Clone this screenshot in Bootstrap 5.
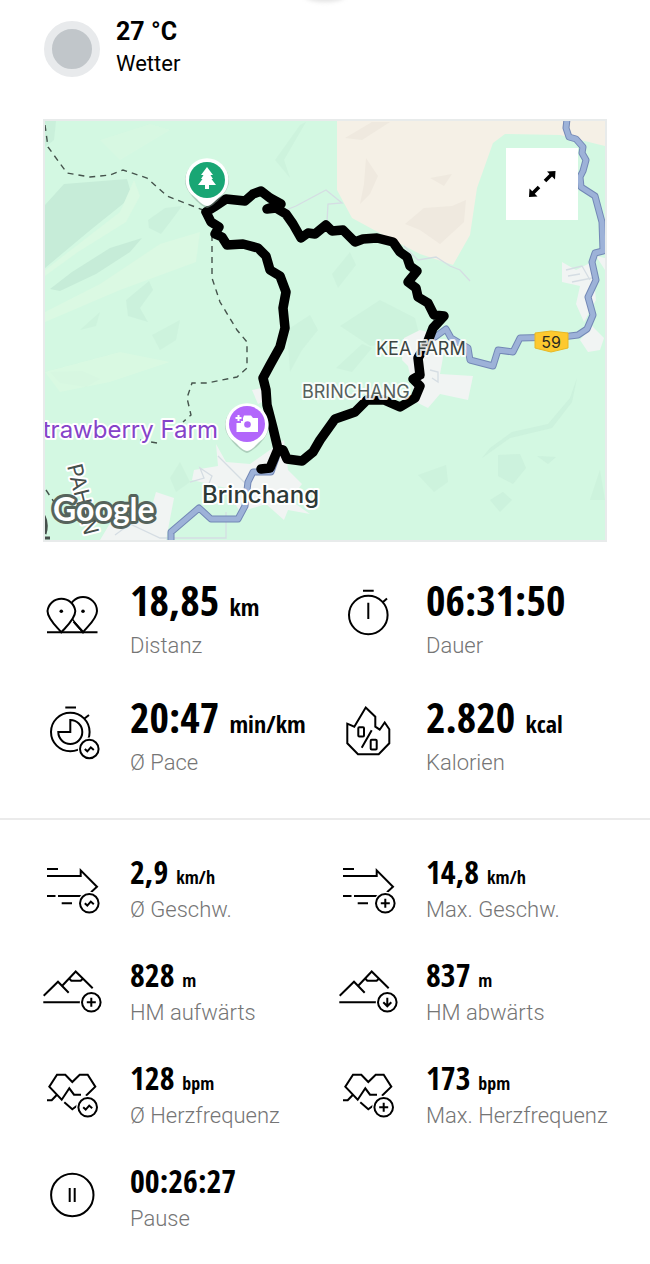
<!DOCTYPE html>
<html lang="de">
<head>
<meta charset="utf-8">
<meta name="viewport" content="width=device-width, initial-scale=1">
<title>Tour Brinchang</title>
<link rel="stylesheet" href="https://cdn.jsdelivr.net/npm/bootstrap@5.3.0/dist/css/bootstrap.min.css">
<style>
  body { background: #fff; color: #000; font-family: Roboto, sans-serif; overflow-x: hidden; }
  .grip { left: 50%; top: -10px; width: 40px; height: 12px; margin-left: -20px; border-radius: 50%; background: #e2e2e2; filter: blur(2px); }
  .weather { padding: 17px 44px 0; gap: 16px; }
  .weather-dot { width: 56px; height: 56px; border: 8px solid #e8eaec; background: #c1c6ca; }
  .weather-temp { font-size: 25px; line-height: 30px; font-weight: 700; }
  .weather-name { font-size: 22px; line-height: 34px; }
  .map-box { margin: 38px 43px 0; border: 2px solid #e8ebeb; background: #d3f8e2; }
  .map-box svg { width: 100%; height: auto; }
  .map-label { font-family: Inter, sans-serif; stroke: #fff; stroke-width: 4; stroke-linejoin: round; paint-order: stroke; }
  .map-expand { top: 27px; right: 27px; width: 72px; height: 72px; background: #fff; }
  .stats { padding-left: 42px; padding-right: 16px; row-gap: 33px; }
  .stats-main { padding-top: 34px; }
  .stats-more { padding-top: 34px; padding-bottom: 31px; }
  .divider { height: 2px; margin-top: 41px; background: #ebebeb; }
  .stat { gap: 24px; }
  .stat-icon { width: 64px; height: 64px; fill: none; stroke: #000; stroke-width: 2; }
  .stat-value { font-family: "Open Sans Condensed", "Roboto Condensed", sans-serif; font-weight: 700; white-space: nowrap; font-size: 32px; line-height: 36px; }
  .stat-value small { font-size: 18px; line-height: 1; }
  .stat-label { color: #757575; font-weight: 300; font-size: 22px; line-height: 28px; margin-top: 6px; white-space: nowrap; }
  .stats-main .stat-value { font-size: 42px; line-height: 48px; }
  .stats-main .stat-value small { font-size: 24px; }
  .stats-main .stat-label { margin-top: 8px; }
</style>
</head>
<body>
<svg class="d-none" aria-hidden="true">
  <symbol id="wave" viewBox="-12 -12 24 24"><circle r="11.5" fill="#fff" stroke="none"/><circle r="9.3" fill="#fff"/><path d="M-4.5 0 L-2 2.3 L1.5 -1.7 L4.5 1"/></symbol>
  <symbol id="plus" viewBox="-12 -12 24 24"><circle r="11.5" fill="#fff" stroke="none"/><circle r="9.3" fill="#fff"/><path d="M-4.5 0H4.5M0-4.5V4.5"/></symbol>
  <symbol id="down" viewBox="-12 -12 24 24"><circle r="11.5" fill="#fff" stroke="none"/><circle r="9.3" fill="#fff"/><path d="M0-4.5V4M-4 0L0 4L4 0"/></symbol>
  <symbol id="speed" viewBox="0 0 64 64"><path d="M5 12H16M5 19H38.7V13.3L55 29.7L49 35.3M5 39H13.5M16 39H40M19.7 46.3H30"/></symbol>
  <symbol id="peaks" viewBox="0 0 64 64"><path d="M1.7 35.7L16 21.7L26.7 32.7M20.7 25.3L33.7 11.5L50.7 28.3M27 18.3L29.3 20.7H38.7L40.7 18.7M1.3 42.3H40"/></symbol>
  <symbol id="heart" viewBox="0 0 64 64"><path d="M44 32.7L53.3 23.7L45.7 11.7H37.7L30.3 19L23.3 11.7H15L7.3 23.7L19.7 36.7L27.3 25.3L32 31.7H39M5 37.3H9.7L14.7 32M22.3 39.3L30.3 46.3L36 42"/></symbol>
</svg>

<div class="grip position-absolute"></div>

<header class="weather d-flex align-items-center">
  <div class="weather-dot rounded-circle"></div>
  <div>
    <div class="weather-temp">27 °C</div>
    <div class="weather-name">Wetter</div>
  </div>
</header>

<section class="map-box position-relative">
  <svg class="d-block" viewBox="45 121 560 419" role="img" aria-label="Karte der Tour">
    <rect x="45" y="121" width="560" height="419" fill="#d3f8e2"/>
    <!-- terrain shading -->
    <g fill="#c6ecd8">
      <path d="M45 205L64 184L127 179L131 193L124 203L88 232L45 268Z"/>
      <path d="M50 289L72 272L110 248L142 238L130 252L96 274L60 291Z"/>
      <path d="M45 121H56L54 140L45 147Z" opacity=".7"/>
      <path d="M148 220L165 208L182 206L171 221L161 234L149 228Z" opacity=".6"/>
      <path d="M126 300L149 281L153 290L140 308L148 322L128 316Z" opacity=".6"/>
      <path d="M287 330L310 315L318 330L302 350L290 372Z" opacity=".4"/>
      <path d="M50 372L82 371L100 379L86 387L60 383Z" opacity=".6"/>
      <path d="M152 335L180 320L176 340L160 350Z" opacity=".4"/>
      <path d="M275 160L300 125L306 122L284 160L290 178Z" opacity=".4"/>
      <path d="M332 274L350 252L356 265L338 288ZM340 326L380 300L415 318L420 338L370 346Z" opacity=".4"/>
      <path d="M498 455L520 454L526 468L513 484L498 476ZM490 500L503 492L512 500L500 512ZM537 456L556 457L548 464Z" opacity=".5"/>
      <path d="M490 448L512 432L548 424L570 398L577 378L572 402L552 428L510 438L482 458Z" opacity=".5"/>
      <path d="M336 368L362 344L372 348L352 372Z M418 475L446 465L448 482L434 492Z M80 330L100 312L96 326Z" opacity=".4"/>
      <path d="M170 478L180 462L190 482L176 492ZM590 500L600 470L605 500Z" opacity=".4"/>
    </g>
    <g fill="#dbf9e3">
      <path d="M45 270L120 212L134 180L140 196L126 222L78 252L45 276Z"/>
      <path d="M45 312L100 284L160 244L200 232L196 262L120 290L45 322Z"/>
      <path d="M45 372L120 352L170 362L110 382L60 392Z" opacity=".7"/>
      <path d="M100 140L150 124L170 130L120 160Z" opacity=".6"/>
    </g>
    <path fill="#f5f0e6" d="M337 121H605V146L560 135L505 134L493 143L477 188L470 235L453 265L420 254L387 237L352 218L337 190Z"/>
    <g fill="#efe9df">
      <path d="M405 224L424 208L452 206L466 200L464 222L440 244L420 230Z"/>
      <path d="M366 158L378 176L370 194L360 204L364 184Z"/>
      <path d="M345 138L372 122H390L362 140Z"/>
      <path d="M430 178L452 174L444 186Z"/>
    </g>
    <!-- built-up areas -->
    <g fill="#f1f4f3">
      <path d="M404 338L420 330L434 334L444 352L440 374L473 376L468 400L440 394L428 408L416 402L408 366L402 360Z"/>
      <path d="M562 262L576 270L592 262L596 300L584 322L576 304L580 286L562 282Z"/>
      <path d="M580 340L592 326L604 338L600 350L588 352Z"/>
      <path d="M216 444L226 462L250 464L284 440L288 470L302 484L290 500L310 514L288 510L284 520L266 504L240 512L226 488L192 480L194 470L218 466Z"/>
      <path d="M252 390L262 388L266 400L258 404Z"/>
      <path d="M156 492L174 498L166 540H100L112 520L148 520Z"/>
      <path d="M596 256L605 258V270Z"/>
    </g>
    <g fill="none" stroke="#d5dde3" stroke-width="1.3">
      <path d="M286 210L296 206L326 190L342 203L328 204L327 222M404 246L418 260L436 257L450 266L460 270L470 281"/>
      <path d="M566 270L582 266L590 280M568 276L580 274M572 282L592 278M218 456L236 474L250 488M190 482L204 478L200 468L212 476L208 486L222 490M115 535L130 524L160 538H226V512M430 370L438 372V382L432 378"/>
    </g>
    <!-- roads -->
    <g fill="none" stroke-linejoin="round" stroke-linecap="round">
      <path stroke="#7388b6" stroke-width="7" d="M567 119L566 128L569 137L576 139L583 147L582 153L586 160L583 171L580 177L581 187L595 196L602 222L603 251L595 253L592 262L596 280L588 297L593 315L587 329L578 335L562 337L520 338L513 352L498 350L493 366L470 360L468 348L451 338L446 329L435 337M276 458L271 472H253L248 482L245 506L238 519H211L199 508L171 532V542"/>
      <path stroke="#9db2d8" stroke-width="5" d="M567 119L566 128L569 137L576 139L583 147L582 153L586 160L583 171L580 177L581 187L595 196L602 222L603 251L595 253L592 262L596 280L588 297L593 315L587 329L578 335L562 337L520 338L513 352L498 350L493 366L470 360L468 348L451 338L446 329L435 337M276 458L271 472H253L248 482L245 506L238 519H211L199 508L171 532V542"/>
    </g>
    <path fill="none" stroke="#45534c" stroke-width="1.4" stroke-dasharray="6 5" d="M45 125L48 147L67 173L90 177L110 175L123 170L147 178L167 196L203 210M212 235V278L220 302L237 330L247 342V368L237 377L207 383L192 383L187 398L191 415L183 422M157 443L140 440M46 490L54 502"/>
    <!-- tour track -->
    <path fill="none" stroke="#000" stroke-width="9.5" stroke-linejoin="round" stroke-linecap="round" d="M261 469L270 468L278 449L273 428L267 405L266 390L263 378L270 365L280 347L285 328L283 308L286 292L280 276L270 270L266 256L258 248L243 244L227 245L222 237L215 234L219 227L211 222L206 212L214 207L226 199L245 201L253 194L261 191L270 198L281 204L267 209L276 208L286 214L293 224L301 238L308 233L315 234L326 225L332 231L343 230L355 242L363 239L377 238L393 242L400 252L407 257L410 266L417 271L408 282L416 288L418 297L428 303L434 315L444 316L433 328L428 341L418 358L420 375L413 379L420 386L415 398L400 407L384 400L367 400L355 412L335 419L320 440L313 452L302 461L287 459L283 450L278 449"/>
    <path fill="#fdc92f" stroke="#e9b824" d="M535 333L551 331L568 333V348L551 352L535 348Z"/>
    <text x="551" y="348" font-family="Inter, sans-serif" font-size="16" text-anchor="middle" fill="#2a2a20">59</text>
    <g class="map-label">
      <text x="302" y="398" font-size="18" fill="#55605c" stroke-opacity=".85">BRINCHANG</text>
      <text x="376" y="355" font-size="18" fill="#3b4542" stroke-opacity=".85">KEA FARM</text>
      <text x="218" y="438" font-size="24" fill="#8543c9" text-anchor="end">trawberry Farm</text>
      <text x="202" y="503" font-size="24" font-weight="500" fill="#2e3936">Brinchang</text>
      <text transform="translate(67 466) rotate(76)" font-size="21" fill="#46504c">PAHAN</text>
    </g>
    <path fill="none" stroke="#46504c" stroke-width="3" d="M44 516Q48 524 45 534M45 538H50"/>
    <text x="53" y="521" font-family="Lato, sans-serif" font-weight="700" font-size="32" fill="#fff" stroke="#56635c" stroke-width="6" stroke-linejoin="round" paint-order="stroke">Google</text>
    <!-- pins -->
    <g>
      <path fill="#8aa598" opacity=".5" d="M207 208C203 208 185 193 185 181A22 22 0 0 1 229 181C229 193 211 208 207 208Z"/>
      <path fill="#fff" d="M207 206C202 206 196 197 191 194A21.500 21.500 0 1 1 223 194C217 198 212 206 207 206Z"/>
      <circle cx="207" cy="180" r="18" fill="#19a674"/>
      <path fill="#fff" d="M207 167L213 175H210.500L213 179H211.500L216 185H209V189H205V185H198L202.500 179H201L203.500 175H201Z"/>
    </g>
    <g>
      <path fill="#8aa598" opacity=".5" d="M247 453C243 453 225 438 225 426A22 22 0 0 1 269 426C269 438 251 453 247 453Z"/>
      <path fill="#fff" d="M247 451C242 451 236 442 231 439A21.500 21.500 0 1 1 263 439C257 443 252 451 247 451Z"/>
      <circle cx="247" cy="424" r="18" fill="#b266fb"/>
      <path fill="#fff" d="M236.500 423V432H258V418H253L251 415.500H244L243 418V421H241V423Z"/>
      <path stroke="#fff" stroke-width="2" d="M235.500 418H241.500M238.500 415V421"/>
      <circle cx="247.500" cy="424.500" r="3.300" fill="#b266fb"/>
    </g>
  </svg>
  <button type="button" class="map-expand position-absolute border-0 p-0 d-flex" aria-label="Karte vergrößern">
    <svg viewBox="0 0 72 72" aria-hidden="true"><g stroke="#000" stroke-width="3.600"><path d="M39 33L46 26M33 39L26 46"/></g><path d="M41 23.500L49.500 23L49 31.500ZM23.500 40.500L23 49L31.500 48.500Z"/></svg>
  </button>
</section>

<main>
  <section class="stats stats-main row g-0">
    <div class="col-6 stat d-flex align-items-center">
      <svg class="stat-icon flex-shrink-0" aria-hidden="true"><path d="M41 46.300C37 41 27 33 27 25A14 14 0 0 1 55 25C55 33 45 41 41 46.300Z"/><path stroke="#fff" stroke-width="5" d="M21 46L31 35"/><path fill="#fff" d="M19.300 46.300C15 41 5.500 33 5.500 25A14 14 0 0 1 33.300 25C33.300 33 24 41 19.300 46.300Z"/><path d="M5 46.300H55.500M31.500 35.500L41 46"/><g fill="#000" stroke="none"><circle cx="19.300" cy="25.300" r="1.800"/><circle cx="41" cy="25.300" r="1.800"/></g></svg>
      <div><div class="stat-value">18,85 <small>km</small></div><div class="stat-label">Distanz</div></div>
    </div>
    <div class="col-6 stat d-flex align-items-center">
      <svg class="stat-icon flex-shrink-0" aria-hidden="true"><circle cx="30.300" cy="29" r="19.300"/><path d="M25 4.700H35.700M44.500 16.500L49 12.500M30.300 16.700V33"/></svg>
      <div><div class="stat-value">06:31:50</div><div class="stat-label">Dauer</div></div>
    </div>
    <div class="col-6 stat d-flex align-items-center">
      <svg class="stat-icon flex-shrink-0" aria-hidden="true"><circle cx="28.300" cy="29" r="19.300"/><path d="M23.300 4.500H34M42.500 15.500L47 12M28.300 17V29H16.300A12 12 0 1 0 28.300 17Z"/><use href="#wave" x="35.300" y="34" width="24" height="24"/></svg>
      <div><div class="stat-value">20:47 <small>min/km</small></div><div class="stat-label">Ø Pace</div></div>
    </div>
    <div class="col-6 stat d-flex align-items-center">
      <svg class="stat-icon flex-shrink-0" aria-hidden="true"><path d="M27.700 4.500L37.300 13.700V23.700L41.700 26.700L46.700 19.500L51.300 26.300V40.300L40.700 51.300H20L9.300 40.300V20.700L16.300 23.700ZM33.700 27.300L23.700 44.700"/><rect x="20.300" y="24.300" width="5.700" height="9.300" rx="1"/><rect x="32.700" y="36.700" width="6" height="9.700" rx="1"/></svg>
      <div><div class="stat-value">2.820 <small>kcal</small></div><div class="stat-label">Kalorien</div></div>
    </div>
  </section>

  <div class="divider"></div>

  <section class="stats stats-more row g-0">
    <div class="col-6 stat d-flex align-items-center">
      <svg class="stat-icon flex-shrink-0" aria-hidden="true"><use href="#speed"/><use href="#wave" x="35.300" y="34.300" width="24" height="24"/></svg>
      <div><div class="stat-value">2,9 <small>km/h</small></div><div class="stat-label">Ø Geschw.</div></div>
    </div>
    <div class="col-6 stat d-flex align-items-center">
      <svg class="stat-icon flex-shrink-0" aria-hidden="true"><use href="#speed"/><use href="#plus" x="35.300" y="34.300" width="24" height="24"/></svg>
      <div><div class="stat-value">14,8 <small>km/h</small></div><div class="stat-label">Max. Geschw.</div></div>
    </div>
    <div class="col-6 stat d-flex align-items-center">
      <svg class="stat-icon flex-shrink-0" aria-hidden="true"><use href="#peaks"/><use href="#plus" x="37.300" y="30.300" width="24" height="24"/></svg>
      <div><div class="stat-value">828 <small>m</small></div><div class="stat-label">HM aufwärts</div></div>
    </div>
    <div class="col-6 stat d-flex align-items-center">
      <svg class="stat-icon flex-shrink-0" aria-hidden="true"><use href="#peaks"/><use href="#down" x="37.300" y="30.300" width="24" height="24"/></svg>
      <div><div class="stat-value">837 <small>m</small></div><div class="stat-label">HM abwärts</div></div>
    </div>
    <div class="col-6 stat d-flex align-items-center">
      <svg class="stat-icon flex-shrink-0" aria-hidden="true"><use href="#heart"/><use href="#wave" x="33.700" y="32.300" width="24" height="24"/></svg>
      <div><div class="stat-value">128 <small>bpm</small></div><div class="stat-label">Ø Herzfrequenz</div></div>
    </div>
    <div class="col-6 stat d-flex align-items-center">
      <svg class="stat-icon flex-shrink-0" aria-hidden="true"><use href="#heart"/><use href="#plus" x="33.700" y="32.300" width="24" height="24"/></svg>
      <div><div class="stat-value">173 <small>bpm</small></div><div class="stat-label">Max. Herzfrequenz</div></div>
    </div>
    <div class="col-6 stat d-flex align-items-center">
      <svg class="stat-icon flex-shrink-0" aria-hidden="true"><circle cx="30.300" cy="29" r="21.200"/><path d="M27.700 22V36M32.700 22V36"/></svg>
      <div><div class="stat-value">00:26:27</div><div class="stat-label">Pause</div></div>
    </div>
  </section>
</main>
<script src="https://cdn.jsdelivr.net/npm/bootstrap@5.3.0/dist/js/bootstrap.bundle.min.js"></script>
</body>
</html>
